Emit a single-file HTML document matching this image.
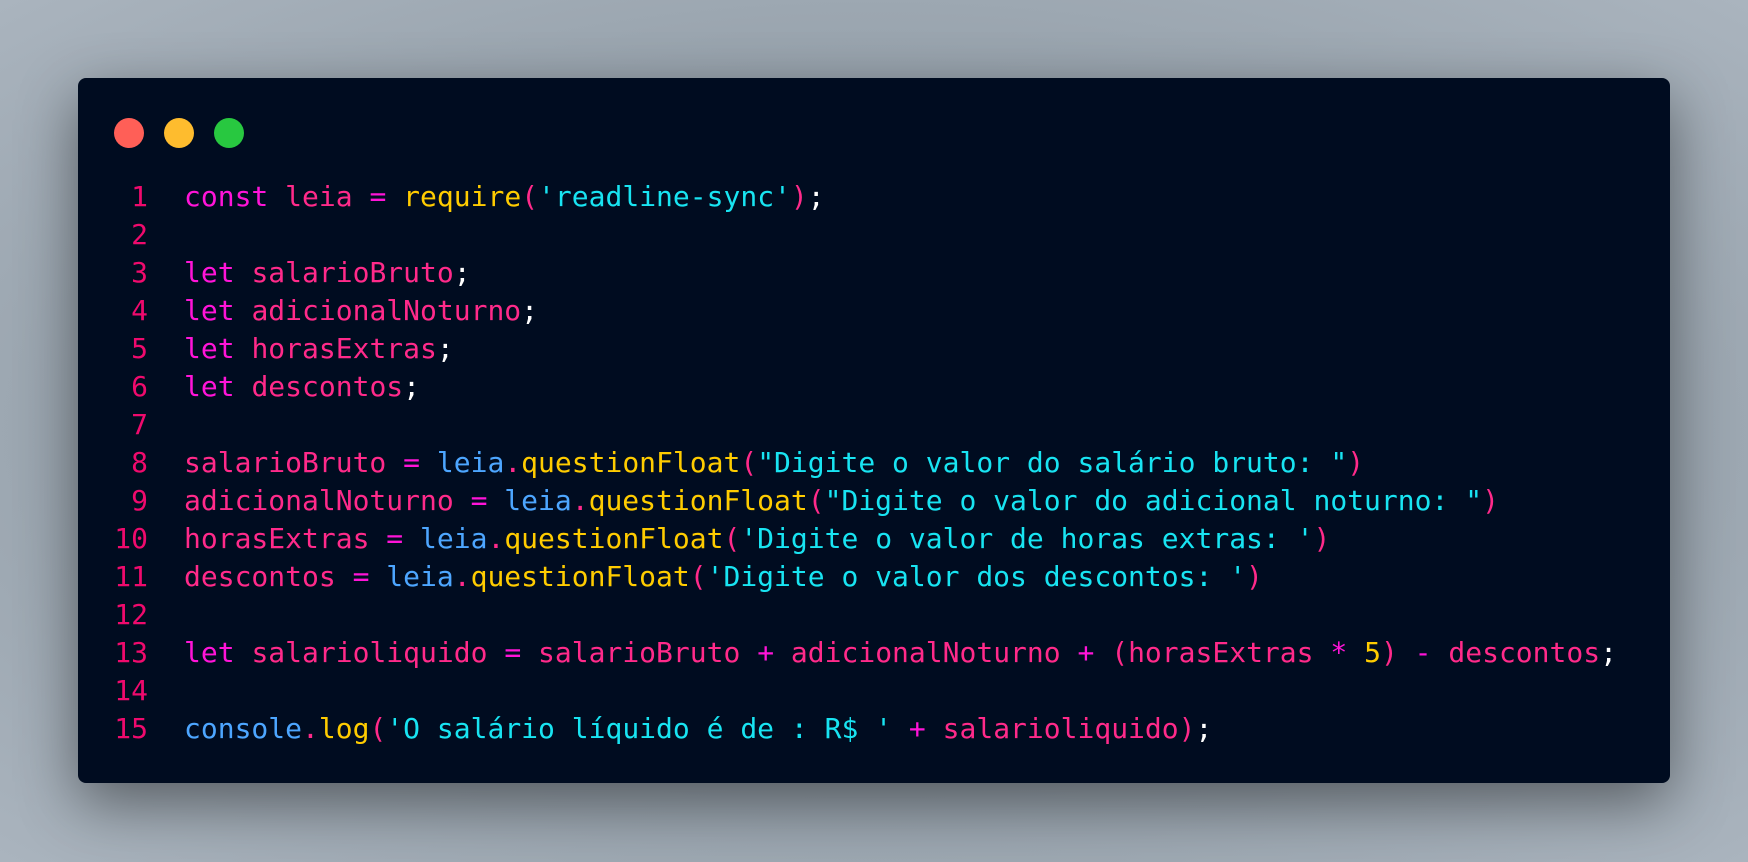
<!DOCTYPE html>
<html><head><meta charset="utf-8"><style>
html,body{margin:0;padding:0;width:1748px;height:862px;overflow:hidden;}
body{background:radial-gradient(ellipse at 50% 50%,#7d858d 0%,#98a3ad 60%,#aab4be 100%);position:relative;}
.win{position:absolute;left:78px;top:78px;width:1592px;height:705px;background:#000c20;border-radius:8px;box-shadow:0 20px 60px rgba(0,0,0,0.45);}
.dot{position:absolute;top:40px;width:30px;height:30px;border-radius:50%;}
pre{position:absolute;left:0;top:100px;margin:0;font-family:"DejaVu Sans Mono","Liberation Mono",monospace;font-size:28px;line-height:38px;color:#fff;}
.ln{display:inline-block;width:70px;text-align:right;color:#ef0a6d;margin-right:36px;}
.k{color:#ff14d8}.v{color:#ff2a8a}.f{color:#ffcc00}.s{color:#18e4f2}.o{color:#4da6ff}.op{color:#ff14d8}.p{color:#ff2a8a}.n{color:#ffcc00}.w{color:#fff}
</style></head><body>
<div class="win">
<div class="dot" style="left:36px;background:#ff5f57"></div>
<div class="dot" style="left:86px;background:#febc2e"></div>
<div class="dot" style="left:136px;background:#28c840"></div>
<pre><span class="ln">1</span><span class="k">const</span> <span class="v">leia</span> <span class="op">=</span> <span class="f">require</span><span class="p">(</span><span class="s">'readline-sync'</span><span class="p">)</span>;
<span class="ln">2</span>
<span class="ln">3</span><span class="k">let</span> <span class="v">salarioBruto</span>;
<span class="ln">4</span><span class="k">let</span> <span class="v">adicionalNoturno</span>;
<span class="ln">5</span><span class="k">let</span> <span class="v">horasExtras</span>;
<span class="ln">6</span><span class="k">let</span> <span class="v">descontos</span>;
<span class="ln">7</span>
<span class="ln">8</span><span class="v">salarioBruto</span> <span class="op">=</span> <span class="o">leia</span><span class="p">.</span><span class="f">questionFloat</span><span class="p">(</span><span class="s">"Digite o valor do salário bruto: "</span><span class="p">)</span>
<span class="ln">9</span><span class="v">adicionalNoturno</span> <span class="op">=</span> <span class="o">leia</span><span class="p">.</span><span class="f">questionFloat</span><span class="p">(</span><span class="s">"Digite o valor do adicional noturno: "</span><span class="p">)</span>
<span class="ln">10</span><span class="v">horasExtras</span> <span class="op">=</span> <span class="o">leia</span><span class="p">.</span><span class="f">questionFloat</span><span class="p">(</span><span class="s">'Digite o valor de horas extras: '</span><span class="p">)</span>
<span class="ln">11</span><span class="v">descontos</span> <span class="op">=</span> <span class="o">leia</span><span class="p">.</span><span class="f">questionFloat</span><span class="p">(</span><span class="s">'Digite o valor dos descontos: '</span><span class="p">)</span>
<span class="ln">12</span>
<span class="ln">13</span><span class="k">let</span> <span class="v">salarioliquido</span> <span class="op">=</span> <span class="v">salarioBruto</span> <span class="op">+</span> <span class="v">adicionalNoturno</span> <span class="op">+</span> <span class="p">(</span><span class="v">horasExtras</span> <span class="op">*</span> <span class="n">5</span><span class="p">)</span> <span class="op">-</span> <span class="v">descontos</span>;
<span class="ln">14</span>
<span class="ln">15</span><span class="o">console</span><span class="p">.</span><span class="f">log</span><span class="p">(</span><span class="s">'O salário líquido é de : R$ '</span> <span class="op">+</span> <span class="v">salarioliquido</span><span class="p">)</span>;</pre>
</div>
</body></html>
